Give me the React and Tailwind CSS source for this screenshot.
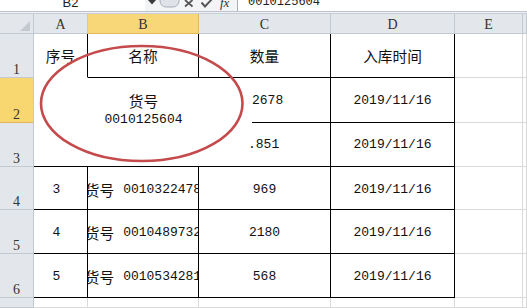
const CJK = "font-['Noto_Sans_CJK_SC',sans-serif] text-[14.67px] leading-[19px]";
const MONO = "font-['Liberation_Mono',monospace] text-[13px] leading-[19px]";
const BASE = "flex items-center justify-center overflow-hidden whitespace-nowrap border-r border-b text-[#111]";
const HDR = "flex items-center justify-center pt-[2px] border-r border-b border-[#c3c9d1] bg-[#e3e7ec] font-['Liberation_Serif',serif] text-[14px] leading-[14px] text-[#333]";
const RH = "flex items-end justify-center border-r border-b border-[#c3c9d1] bg-[#e3e7ec] font-['Liberation_Serif',serif] text-[14px] leading-[14px] text-[#333]";

function Goods({ code }) {
  return (
    <div className={BASE + " border-r-black border-b-black pt-[2px]"}>
      <span className={CJK}>货号</span>
      <span className={MONO + " ml-[9px]"}>{code}</span>
    </div>
  );
}

function DataRow({ n, seq, code, qty }) {
  return (
    <>
      <div className={RH}>{n}</div>
      <div className={BASE + " border-r-black border-b-black pt-[2px] pr-[8px]"}>
        <span className={MONO}>{seq}</span>
      </div>
      <Goods code={code} />
      <div className={BASE + " border-r-black border-b-black pt-[2px]"}>
        <span className={MONO}>{qty}</span>
      </div>
      <div className={BASE + " border-r-black border-b-black pt-[2px]"}>
        <span className={MONO}>2019/11/16</span>
      </div>
      <div className={BASE + " border-[#d9d9d9]"} />
      <div className={BASE + " border-[#d9d9d9]"} />
    </>
  );
}

export default function App() {
  return (
    <div className="relative w-[527px] h-[308px] overflow-hidden bg-white">
      {/* formula bar */}
      <div className="flex flex-col h-[14px]">
        <div className="flex h-[11px] overflow-hidden bg-[#f3f4f6]">
          <div className="w-[145px] bg-white flex justify-center">
            <div className="font-['Liberation_Sans',sans-serif] text-[13px] leading-[13px] -mt-[4px] -ml-[4px] text-[#222]">B2</div>
          </div>
          <svg width="73" height="11" viewBox="0 0 73 11">
            <polygon points="3,0 11,0 7,4.5" fill="#3a3a3a" />
            <rect x="15" y="-6" width="19" height="13" rx="6" fill="#dfe2e7" stroke="#a9b0ba" />
            <line x1="40" y1="0" x2="47.5" y2="6.5" stroke="#555" strokeWidth="1.7" />
            <line x1="47.5" y1="0" x2="40" y2="6.5" stroke="#555" strokeWidth="1.7" />
            <polyline points="56.5,2.5 60,6.5 67,-1" fill="none" stroke="#555" strokeWidth="1.9" />
          </svg>
          <div className="w-[19px] flex">
            <span className="font-['Liberation_Serif',serif] italic text-[13px] leading-[13px] -mt-[4px] ml-[2px] text-[#333]">fx</span>
          </div>
          <div className="flex-1 bg-white border-l border-[#a9b0ba] pl-[10px]">
            <div className="font-['Liberation_Mono',monospace] text-[12px] leading-[13px] -mt-[4px] text-[#222]">0010125604</div>
          </div>
        </div>
        <div className="h-px bg-[#bcc3cc]" />
        <div className="h-px bg-[#eef0f3]" />
        <div className="h-px bg-[#c9ced6]" />
      </div>

      {/* sheet grid */}
      <div className="grid grid-cols-[34px_54px_111px_132px_124px_68px_1fr] grid-rows-[20px_44px_45px_44px_43px_44px_44px_1fr] h-[294px]">
        {/* column headers */}
        <div className="relative border-r border-b border-[#c3c9d1] bg-[#e3e7ec]">
          <svg className="absolute right-[3px] bottom-[2px]" width="10" height="10" viewBox="0 0 10 10">
            <polygon points="10,0 10,10 0,10" fill="#c4c9d0" />
          </svg>
        </div>
        <div className={HDR}>A</div>
        <div className={HDR + " bg-[#f8d778] border-r-[#e2b85a] border-b-[#e2b85a]"}>B</div>
        <div className={HDR}>C</div>
        <div className={HDR}>D</div>
        <div className={HDR}>E</div>
        <div className={HDR} />

        {/* row 1 */}
        <div className={RH}>1</div>
        <div className={BASE + " border-r-black border-b-white"}>
          <span className={CJK}>序号</span>
        </div>
        <div className={BASE + " border-r-black border-b-black"}>
          <span className={CJK}>名称</span>
        </div>
        <div className={BASE + " border-r-black border-b-black"}>
          <span className={CJK}>数量</span>
        </div>
        <div className={BASE + " border-r-black border-b-black"}>
          <span className={CJK}>入库时间</span>
        </div>
        <div className={BASE + " border-[#d9d9d9]"} />
        <div className={BASE + " border-[#d9d9d9]"} />

        {/* rows 2-3 */}
        <div className={RH + " bg-[#f8d670] border-b-[#e2b85a]"}>2</div>
        <div className="col-span-2 row-span-2 flex flex-col items-center pt-[13px] pl-[54px] border-b border-black bg-white text-[#111]">
          <span className={CJK}>货号</span>
          <span className={MONO}>0010125604</span>
        </div>
        <div className="flex border-r border-black text-[#111] overflow-hidden whitespace-nowrap">
          <div className="w-[53px] bg-white" />
          <div className="flex-1 flex items-center border-b border-black">
            <span className={MONO}>2678</span>
          </div>
        </div>
        <div className={BASE + " border-r-black border-b-black"}>
          <span className={MONO}>2019/11/16</span>
        </div>
        <div className={BASE + " border-[#d9d9d9]"} />
        <div className={BASE + " border-[#d9d9d9]"} />

        <div className={RH}>3</div>
        <div className={BASE + " justify-start pl-[49px] border-r-black border-b-black"}>
          <span className={MONO}>.851</span>
        </div>
        <div className={BASE + " border-r-black border-b-black"}>
          <span className={MONO}>2019/11/16</span>
        </div>
        <div className={BASE + " border-[#d9d9d9]"} />
        <div className={BASE + " border-[#d9d9d9]"} />

        <DataRow n="4" seq="3" code="0010322478" qty="969" />
        <DataRow n="5" seq="4" code="0010489732" qty="2180" />
        <DataRow n="6" seq="5" code="0010534281" qty="568" />

        {/* row 7 */}
        <div className={RH} />
        <div className={BASE + " border-[#d9d9d9]"} />
        <div className={BASE + " border-[#d9d9d9]"} />
        <div className={BASE + " border-[#d9d9d9]"} />
        <div className={BASE + " border-[#d9d9d9]"} />
        <div className={BASE + " border-[#d9d9d9]"} />
        <div className={BASE + " border-[#d9d9d9]"} />
      </div>

      {/* red ellipse annotation */}
      <svg className="absolute inset-0 pointer-events-none" width="527" height="308" viewBox="0 0 527 308">
        <ellipse cx="141.75" cy="103.5" rx="100.75" ry="57.5" fill="none" stroke="#c44a4c" strokeWidth="2.6" />
      </svg>
    </div>
  );
}
